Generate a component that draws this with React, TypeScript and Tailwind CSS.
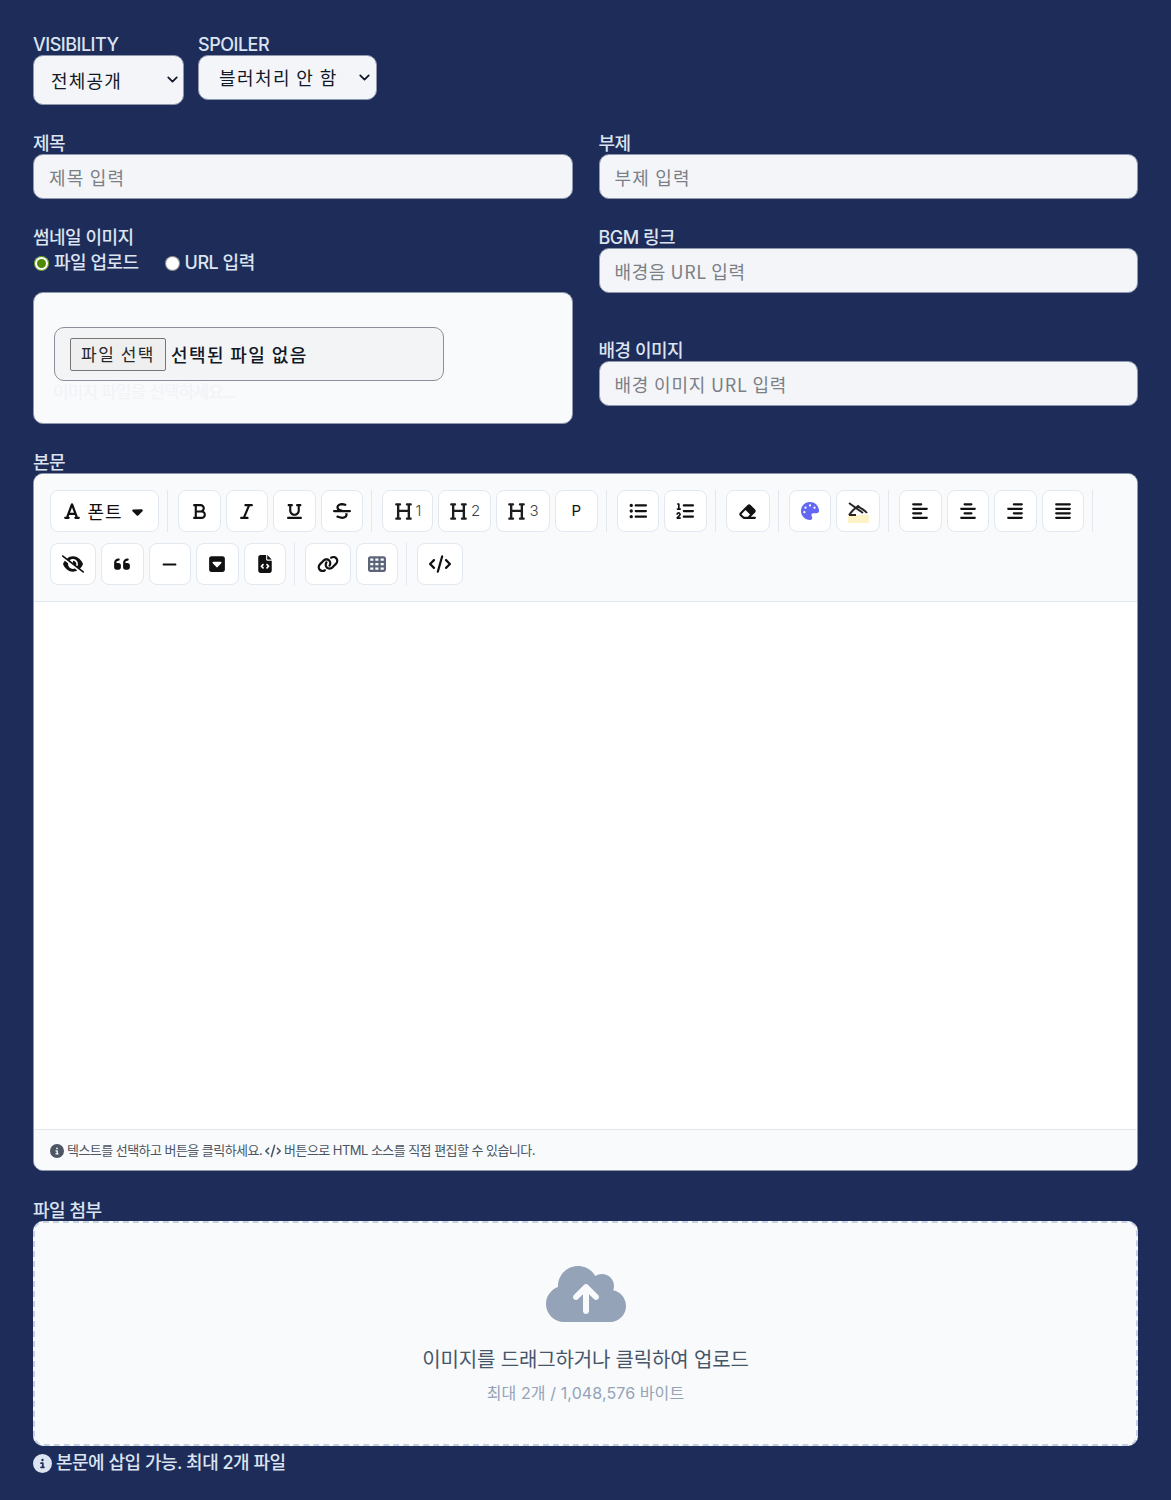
import React from 'react';
import { ChevronDown } from 'lucide-react';
import {
  FaFont, FaCaretDown, FaBold, FaItalic, FaUnderline, FaStrikethrough, FaHeading, FaListUl, FaListOl,
  FaEraser, FaPalette, FaAlignLeft, FaAlignCenter, FaAlignRight, FaAlignJustify, FaEyeSlash, FaQuoteLeft,
  FaMinus, FaSquareCaretDown, FaFileCode, FaLink, FaTableCells, FaCode, FaCircleInfo, FaCloudArrowUp,
} from 'react-icons/fa6';

const ui = 'font-["Inter","Noto_Sans_CJK_KR",sans-serif]';
const labelClass = 'block text-[18px] leading-[21px] font-medium tracking-[-0.5px] text-[#dbe4f0]';
const fieldClass =
  'block w-full h-[45px] rounded-[10px] border border-[#8f98ad] bg-[#f3f5f8] px-[15px] text-[18px] text-[#111827] placeholder:text-[#7b7f86] outline-none font-["Noto_Sans_CJK_KR",sans-serif]';

function Field({ label, placeholder, tracking }: { label: string; placeholder: string; tracking: string }) {
  return (
    <div>
      <label className={labelClass}>{label}</label>
      <input type="text" placeholder={placeholder} className={`${fieldClass} ${tracking}`} />
    </div>
  );
}

function Btn({ children, w = 'w-[42.5px]' }: { children: React.ReactNode; w?: string }) {
  return (
    <button
      type="button"
      className={`${w} h-[42px] shrink-0 flex items-center justify-center gap-[3px] rounded-[8px] border border-[#e2e8f0] bg-white text-[18px] text-[#111111]`}
    >
      {children}
    </button>
  );
}

function Sep() {
  return <span className="w-px h-[42px] ml-[3px] mr-[5px] shrink-0 bg-[#e2e8f0]" />;
}

function HeadingBtn({ n, w }: { n: string; w: string }) {
  return (
    <Btn w={w}>
      <FaHeading className="text-[#1c1c1f]" size={19} />
      <span className="text-[15px] font-light text-[#3f3f46]">{n}</span>
    </Btn>
  );
}

function Toolbar() {
  return (
    <div className="flex flex-wrap items-center gap-x-[5px] gap-y-[11px] px-[16px] pt-[16px] pb-[16px] bg-[#f8fafc] border-b border-[#e2e8f0]">
      <Btn w="w-[109px]">
        <FaFont size={18} />
        <span className="ml-[3px] text-[18px] tracking-[1px] font-['Noto_Sans_CJK_KR',sans-serif]">폰트</span>
        <FaCaretDown size={17} className="ml-[3px]" />
      </Btn>
      <Sep />
      <Btn><FaBold size={17} /></Btn>
      <Btn><FaItalic size={17} /></Btn>
      <Btn><FaUnderline size={17} /></Btn>
      <Btn><FaStrikethrough size={18} /></Btn>
      <Sep />
      <HeadingBtn n="1" w="w-[51px]" />
      <HeadingBtn n="2" w="w-[53px]" />
      <HeadingBtn n="3" w="w-[54px]" />
      <Btn><span className="text-[15px] font-normal">P</span></Btn>
      <Sep />
      <Btn><FaListUl size={18} /></Btn>
      <Btn><FaListOl size={18} /></Btn>
      <Sep />
      <Btn w="w-[44px]"><FaEraser size={19} /></Btn>
      <Sep />
      <Btn><FaPalette size={18} className="text-[#6366f1]" /></Btn>
      <Btn w="w-[44px]">
        <span className="relative flex items-center justify-center w-[22px] h-[22px]">
          <span className="absolute left-[1px] right-0 bottom-[-1px] h-[8px] bg-[#fef3c7]" />
          <svg viewBox="0 0 22 22" className="relative w-[22px] h-[22px]" fill="none" stroke="#27272a" strokeWidth="2">
            <path d="M2 3 L16 13" />
            <path d="M2 15 C5 11 8 8 11 6 C14 9 18 10 20 13" />
            <path d="M2 15 L9 15" />
          </svg>
        </span>
      </Btn>
      <Sep />
      <Btn><FaAlignLeft size={18} /></Btn>
      <Btn><FaAlignCenter size={18} /></Btn>
      <Btn><FaAlignRight size={18} /></Btn>
      <Btn><FaAlignJustify size={18} /></Btn>
      <Sep />
      <Btn w="w-[46px]"><FaEyeSlash size={22} /></Btn>
      <Btn><FaQuoteLeft size={18} /></Btn>
      <Btn><FaMinus size={17} /></Btn>
      <Btn><FaSquareCaretDown size={18} /></Btn>
      <Btn><FaFileCode size={18} /></Btn>
      <Sep />
      <Btn w="w-[46px]"><FaLink size={22} /></Btn>
      <Btn w="w-[42px]"><FaTableCells size={18} className="text-[#5b6478]" /></Btn>
      <Sep />
      <Btn w="w-[46px]"><FaCode size={22} /></Btn>
    </div>
  );
}

export default function App() {
  return (
    <div className={`${ui} min-h-[1500px] bg-[#1e2c5a] px-[33px] pt-[34px]`}>
      {/* visibility + spoiler */}
      <div className="flex items-start gap-[14px]">
        <div>
          <label className={labelClass}>VISIBILITY</label>
          <div className="relative">
            <select className="block appearance-none w-[151px] h-[50px] rounded-[10px] border border-[#8f98ad] bg-[#f3f5f8] pl-[17px] text-[18px] tracking-[1.2px] text-[#111827] font-['Noto_Sans_CJK_KR',sans-serif]">
              <option>전체공개</option>
            </select>
            <ChevronDown size={17} strokeWidth={2.5} className="absolute right-[3px] top-[16px] text-[#111827] pointer-events-none" />
          </div>
        </div>
        <div>
          <label className={labelClass}>SPOILER</label>
          <div className="relative">
            <select className="block appearance-none w-[179px] h-[45px] rounded-[10px] border border-[#8f98ad] bg-[#f3f5f8] pl-[20px] text-[18px] tracking-[1.4px] text-[#111827] font-['Noto_Sans_CJK_KR',sans-serif]">
              <option>블러처리 안 함</option>
            </select>
            <ChevronDown size={17} strokeWidth={2.5} className="absolute right-[4px] top-[14px] text-[#111827] pointer-events-none" />
          </div>
        </div>
      </div>

      <div className="grid grid-cols-2 gap-x-[26px] mt-[28px]">
        <Field label="제목" placeholder="제목 입력" tracking="tracking-[1.2px]" />
        <Field label="부제" placeholder="부제 입력" tracking="tracking-[1.2px]" />
      </div>

      <div className="grid grid-cols-2 gap-x-[26px] mt-[28px]">
        <div>
          <label className={labelClass}>썸네일 이미지</label>
          <div className="flex items-center h-[30px] text-[18px] leading-[28px] tracking-[-0.5px] text-[#dbe4f0] font-medium">
            <label className="flex items-center">
              <input type="radio" name="thumb" defaultChecked className="w-[15px] h-[15px] m-0 ml-[1px] mr-[5px] accent-[#4f8a00]" />
              파일 업로드
            </label>
            <label className="flex items-center ml-[26px]">
              <input type="radio" name="thumb" className="w-[15px] h-[15px] m-0 mr-[5px]" />
              URL 입력
            </label>
          </div>
          <div className="mt-[14px] h-[132px] rounded-[10px] border border-[#8f98ad] bg-[#f8fafc] pl-[20px] pt-[34px]">
            <div className="flex items-center w-[390px] h-[54px] rounded-[10px] border border-[#8a8f99] bg-[#f3f4f6] pl-[15px] font-['Noto_Sans_CJK_KR',sans-serif]">
              <button type="button" className="h-[33px] w-[96px] rounded-[2px] border border-[#767676] bg-[#efefef] text-[17px] tracking-[1.5px] text-[#27272a]">
                파일 선택
              </button>
              <span className="ml-[5px] text-[18px] tracking-[1.4px] font-medium text-[#111827]">선택된 파일 없음</span>
            </div>
            <p className="mt-[1px] -ml-[1px] text-[17px] leading-[20px] tracking-[-0.9px] text-[#f1f3f6]">이미지 파일을 선택하세요...</p>
          </div>
        </div>
        <div>
          <Field label="BGM 링크" placeholder="배경음 URL 입력" tracking="tracking-[0.6px]" />
          <div className="mt-[47px]">
            <Field label="배경 이미지" placeholder="배경 이미지 URL 입력" tracking="tracking-[0.8px]" />
          </div>
        </div>
      </div>

      {/* editor */}
      <div className="mt-[28px]">
        <label className={labelClass}>본문</label>
        <div className="overflow-hidden rounded-[10px] border border-[#8f98ad] bg-white">
          <Toolbar />
          <div className="h-[527px] bg-white" />
          <div className="flex items-center gap-[3px] h-[41px] border-t border-[#e2e8f0] bg-[#f8fafc] pl-[16px] pt-[1px] text-[13px] tracking-[-0.55px] text-[#4b5563]">
            <FaCircleInfo size={14} />
            <span className="inline-flex items-center gap-[3px]">텍스트를 선택하고 버튼을 클릭하세요. <FaCode size={16} /> 버튼으로 HTML 소스를 직접 편집할 수 있습니다.</span>
          </div>
        </div>
      </div>

      {/* attachments */}
      <div className="mt-[29px]">
        <label className={labelClass}>파일 첨부</label>
        <div className="flex flex-col items-center h-[225px] rounded-[10px] border-2 border-dashed border-[#c5d0e0] bg-[#f8fafc] pt-[36px]">
          <FaCloudArrowUp size={80} className="text-[#94a3b8] h-[70px]" />
          <p className="mt-[17px] text-[20px] leading-[28px] tracking-[-0.15px] text-[#475569]">이미지를 드래그하거나 클릭하여 업로드</p>
          <p className="mt-[7px] text-[16px] leading-[24px] tracking-[0.1px] text-[#94a3b8]">최대 2개 / 1,048,576 바이트</p>
        </div>
        <p className="flex items-center gap-[4px] mt-[5px] text-[18px] leading-[24px] font-medium tracking-[-0.5px] text-[#dbe4f0]">
          <FaCircleInfo size={19} />
          본문에 삽입 가능. 최대 2개 파일
        </p>
      </div>
    </div>
  );
}
